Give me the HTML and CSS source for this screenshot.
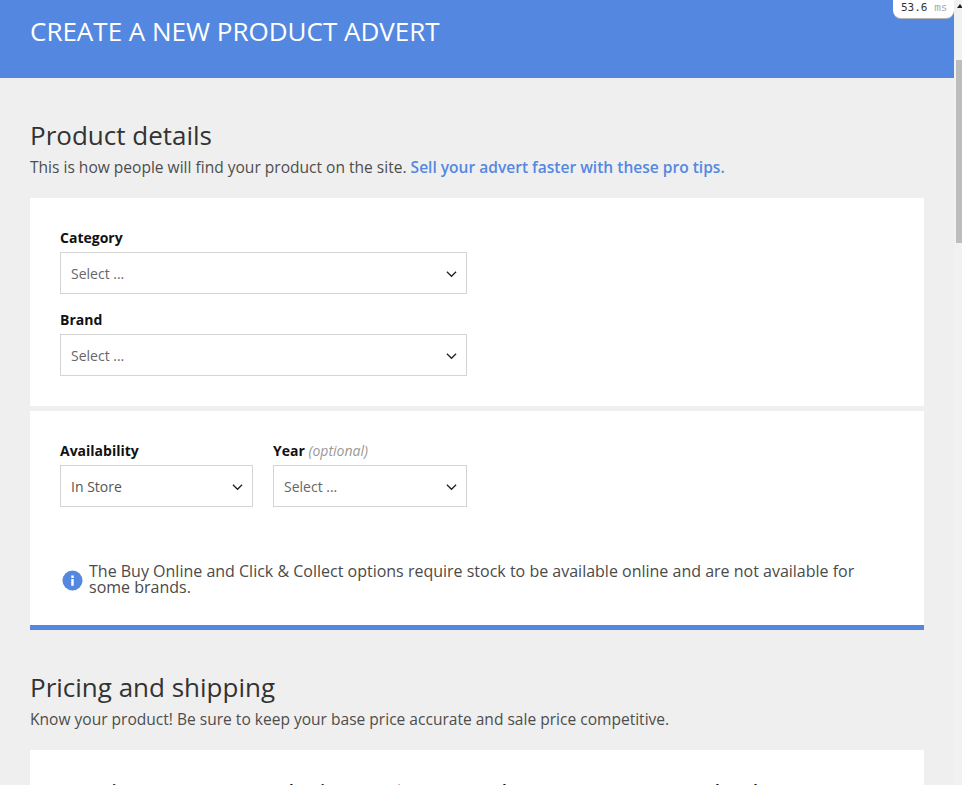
FILE: index.html
```html
<!DOCTYPE html>
<html lang="en">
<head>
<meta charset="utf-8">
<title>Create a new product advert</title>
<link rel="stylesheet" href="styles.css">
</head>
<body>
<div class="viewport">
  <main class="page">
    <header class="banner"><h1>CREATE A NEW PRODUCT ADVERT</h1></header>
    <div class="content">
      <section class="intro">
        <h2>Product details</h2>
        <p>This is how people will find your product on the site. <a href="#">Sell your advert faster with these pro tips.</a></p>
      </section>
      <div class="card card-first">
        <div class="field">
          <label>Category</label>
          <div class="select"><span>Select ...</span><svg class="chev" viewBox="0 0 12 8"><path d="M1 1.5l5 5 5-5"/></svg></div>
        </div>
        <div class="field">
          <label>Brand</label>
          <div class="select"><span>Select ...</span><svg class="chev" viewBox="0 0 12 8"><path d="M1 1.5l5 5 5-5"/></svg></div>
        </div>
      </div>
      <div class="card card-second">
        <div class="pair">
          <div class="field">
            <label>Availability</label>
            <div class="select"><span class="val">In Store</span><svg class="chev" viewBox="0 0 12 8"><path d="M1 1.5l5 5 5-5"/></svg></div>
          </div>
          <div class="field">
            <label>Year <em>(optional)</em></label>
            <div class="select"><span>Select ...</span><svg class="chev" viewBox="0 0 12 8"><path d="M1 1.5l5 5 5-5"/></svg></div>
          </div>
        </div>
        <div class="notice">
          <svg class="info" viewBox="0 0 22 22"><circle cx="11" cy="11" r="10.5" fill="#5488e0"/><rect x="9.7" y="9.5" width="2.6" height="7" fill="#fff"/><rect x="9.7" y="5.7" width="2.6" height="2.6" fill="#fff"/></svg>
          <p>The Buy Online and Click &amp; Collect options require stock to be available online and are not available for some brands.</p>
        </div>
      </div>
      <section class="intro">
        <h2>Pricing and shipping</h2>
        <p>Know your product! Be sure to keep your base price accurate and sale price competitive.</p>
      </section>
      <div class="card card-third">
        <div class="prices">
          <label>Base price</label>
          <label>Sale price <em>(optional)</em></label>
          <label>Sale start</label>
          <label>Sale end</label>
        </div>
      </div>
    </div>
  </main>
  <div class="scrollbar">
    <div class="arrow"></div>
    <div class="thumb"></div>
  </div>
  <div class="timer"><b>53.6</b> <span>ms</span></div>
</div>
</body>
</html>
```
FILE: styles.css
```css
* { box-sizing: border-box; }
html, body { margin: 0; height: 100%; overflow: hidden; }
body { font-family: "Open Sans", "Noto Sans", sans-serif; color: #333; background: #efefef; }
.viewport { position: relative; display: flex; width: 962px; height: 785px; overflow: hidden; }
.page { flex: 0 0 954px; width: 954px; }
.banner { height: 78px; background: #5488e0; padding: 14px 30px 0; }
.banner h1 { margin: 0; font-size: 26px; line-height: 34px; font-weight: 400; color: #fff; }
.content { padding: 0 30px; }
.intro { padding-top: 40px; height: 120px; }
.intro h2 { margin: 0; font-size: 26px; line-height: 34px; font-weight: 400; color: #333; }
.intro p { margin: 4px 0 0; font-size: 15.56px; line-height: 22px; color: #4d4d4d; }
.intro a { color: #5488e0; font-weight: 600; text-decoration: none; }
.card { background: #fff; padding: 30px; }
.card-first { height: 208px; margin-bottom: 5px; }
.card-second { height: 219px; border-bottom: 5px solid #5488e0; }
.card-third { height: 300px; }
.field { width: 407px; margin-bottom: 16px; }
.field label { display: block; font-size: 14px; line-height: 20px; font-weight: 700; color: #111; margin-bottom: 4px; }
.field em { font-weight: 400; color: #999; }
.select { display: flex; align-items: center; justify-content: space-between; height: 42px; border: 1px solid #d4d4d4; background: #fff; padding: 0 9px 0 10px; font-size: 14px; color: #666; }
.select .val { color: #555; }
.chev { width: 11px; height: 8px; margin-top: 2px; }
.chev path { fill: none; stroke: #222; stroke-width: 1.4; }
.pair { display: grid; grid-template-columns: 193px 194px; column-gap: 20px; width: 407px; }
.pair .field { width: auto; margin: 0; }
.notice { display: flex; align-items: center; gap: 6px; margin-top: 56px; margin-left: 2px; }
.info { flex: 0 0 21px; width: 21px; height: 21px; margin-top: 2px; }
.notice p { margin: 0; font-size: 16px; line-height: 16px; color: #4a4a4a; }
.prices { display: grid; grid-template-columns: repeat(4, 193px); column-gap: 20px; }
.prices label { font-size: 14px; font-weight: 700; line-height: 20px; color: #111; }
.prices em { font-weight: 400; color: #999; }
.scrollbar { flex: 0 0 8px; width: 8px; background: #f1f1ef; padding-left: 2px; }
.arrow { height: 60px; padding-top: 4px; }
.arrow::before { content: ""; display: block; width: 0; height: 0; margin-left: 1px; border-left: 3px solid transparent; border-right: 3px solid transparent; border-bottom: 4px solid #222; }
.thumb { height: 183px; background: #bdbdbd; }
.timer { position: absolute; top: 0; right: 8px; width: 61px; height: 18px; background: #fff; border-radius: 0 0 8px 8px; box-shadow: 0 1px 0 #b5b5b5; font-family: "DejaVu Sans Mono", monospace; font-size: 11px; line-height: 16px; padding-left: 8px; color: #aaa; white-space: nowrap; }
.timer b { font-weight: 400; color: #333; }
```
